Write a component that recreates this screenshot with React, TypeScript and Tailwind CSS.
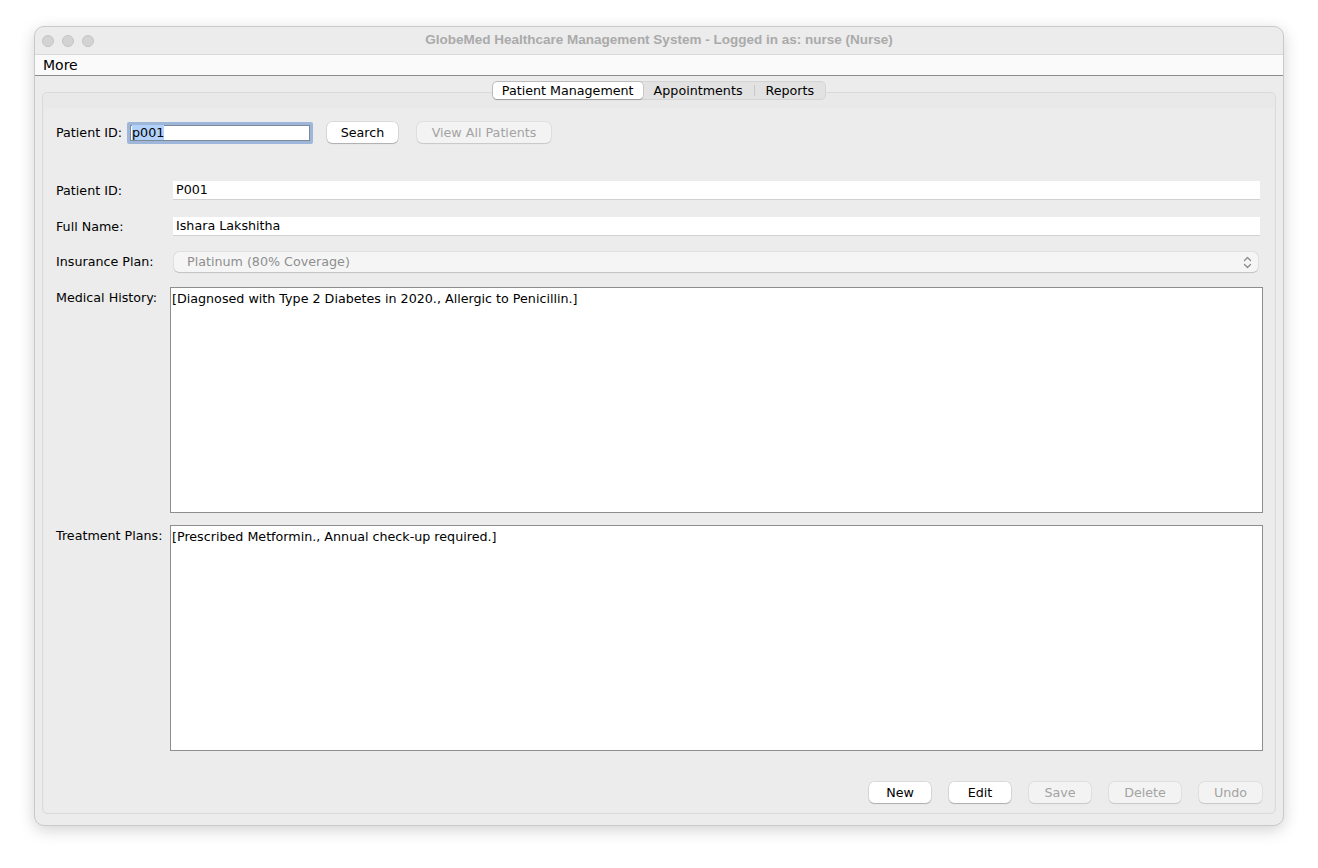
import React from "react";

const font = { fontFamily: '"DejaVu Sans", "Liberation Sans", Arial, sans-serif' };
const titleFont = { fontFamily: '"Liberation Sans", Arial, sans-serif' };

function Btn({ label, w, disabled }: { label: string; w: string; disabled?: boolean }) {
  return (
    <div
      className={`${w} h-[21px] flex items-center justify-center rounded-[5px] text-[12.7px] ${
        disabled
          ? "bg-[#f3f3f3] text-[#a3a3a3] shadow-[0_0_0_0.5px_rgba(0,0,0,0.08),0_0.5px_1px_rgba(0,0,0,0.12)]"
          : "bg-white text-black shadow-[0_0_0_0.5px_rgba(0,0,0,0.15),0_1px_1px_rgba(0,0,0,0.2)]"
      }`}
    >
      {label}
    </div>
  );
}

export default function App() {
  return (
    <div className="w-[1318px] h-[868px] bg-white pt-[26px] pl-[34px]" style={font}>
      <div className="w-[1250px] h-[800px] rounded-[10px] bg-[#ececec] border border-[#c9c9c9] shadow-[0_4px_16px_rgba(0,0,0,0.18)] overflow-hidden flex flex-col">
        {/* Title bar */}
        <div className="h-[27px] flex items-center relative shrink-0">
          <div className="flex gap-[8px] pl-[7px]">
            <div className="w-[12px] h-[12px] rounded-full bg-[#d3d3d3] border border-[#c4c4c4]" />
            <div className="w-[12px] h-[12px] rounded-full bg-[#d3d3d3] border border-[#c4c4c4]" />
            <div className="w-[12px] h-[12px] rounded-full bg-[#d3d3d3] border border-[#c4c4c4]" />
          </div>
          <div
            className="absolute inset-0 flex items-center justify-center text-[13.5px] font-bold text-[#aaaaaa]"
            style={titleFont}
          >
            GlobeMed Healthcare Management System - Logged in as: nurse (Nurse)
          </div>
        </div>
        {/* Menu bar */}
        <div className="h-[22px] shrink-0 bg-[#fafafa] border-t border-[#d8d8d8] border-b border-b-[#8c8c8c] flex items-center pl-[8px] text-[14px] text-black">
          More
        </div>
        {/* Content */}
        <div className="flex-1 flex flex-col px-[7px] pb-[11px]">
          <div className="h-[19px] mt-[5px] flex justify-center relative z-10">
            <div className="flex items-center h-[19px] rounded-[5px] bg-[#e2e2e2] border border-[#d4d4d4] text-[12.7px] text-black">
              <div className="h-[17px] px-[9px] flex items-center bg-white rounded-[4px] shadow-[0_0_0_0.5px_rgba(0,0,0,0.2),0_0.5px_1px_rgba(0,0,0,0.2)]">
                Patient Management
              </div>
              <div className="h-[17px] px-[11px] flex items-center">Appointments</div>
              <div className="w-px h-[11px] bg-[#c8c8c8]" />
              <div className="h-[17px] px-[11px] flex items-center">Reports</div>
            </div>
          </div>
          <div className="flex-1 -mt-[8px] rounded-[5px] border border-[#dadada] bg-[#e9e9e9] flex flex-col">
            <div className="mt-[15px] flex-1 mx-[1px] mb-[1px] bg-[#ececec] rounded-b-[4px] flex flex-col pl-[12px] pr-[11px] text-[12.7px] text-black">
              {/* Search row */}
              <div className="mt-[14px] h-[21px] flex items-center">
                <span className="w-[71px] shrink-0">Patient ID:</span>
                <div className="w-[186px] h-[22px] border-[3px] border-[#9db6d9] rounded-[2px] bg-white flex items-center">
                  <div className="w-full h-full border border-[#7f8a99] flex items-center pl-[1px]">
                    <span className="bg-[#b3d2fb] leading-[15px]">p001</span>
                  </div>
                </div>
                <div className="ml-[14px]">
                  <Btn label="Search" w="w-[71px]" />
                </div>
                <div className="ml-[19px]">
                  <Btn label="View All Patients" w="w-[134px]" disabled />
                </div>
              </div>
              {/* Patient ID */}
              <div className="mt-[38px] h-[19px] flex items-center">
                <span className="w-[117px] shrink-0">Patient ID:</span>
                <div className="flex-1 mr-[3px] h-[19px] bg-white border-b border-[#d2d2d2] flex items-center pl-[3px]">P001</div>
              </div>
              {/* Full name */}
              <div className="mt-[17px] h-[19px] flex items-center">
                <span className="w-[117px] shrink-0">Full Name:</span>
                <div className="flex-1 mr-[3px] h-[19px] bg-white border-b border-[#d2d2d2] flex items-center pl-[3px]">Ishara Lakshitha</div>
              </div>
              {/* Insurance */}
              <div className="mt-[16px] h-[20px] flex items-center">
                <span className="w-[118px] shrink-0">Insurance Plan:</span>
                <div className="flex-1 mr-[5px] h-[20px] bg-[#f5f5f5] rounded-[5px] shadow-[0_0_0_0.5px_rgba(0,0,0,0.08),0_0.5px_1px_rgba(0,0,0,0.15)] flex items-center justify-between pl-[13px] pr-[6px] text-[#8e8e8e]">
                  <span>Platinum (80% Coverage)</span>
                  <svg width="9" height="13" viewBox="0 0 9 13" fill="none" stroke="#8a8a8a" strokeWidth="1.3" strokeLinecap="round" strokeLinejoin="round">
                    <path d="M1.5 4.5 L4.5 1.5 L7.5 4.5" />
                    <path d="M1.5 8.5 L4.5 11.5 L7.5 8.5" />
                  </svg>
                </div>
              </div>
              {/* Medical history */}
              <div className="mt-[15px] h-[226px] flex items-start">
                <span className="w-[114px] shrink-0 mt-[1px] whitespace-nowrap">Medical History:</span>
                <div className="flex-1 h-full bg-white border border-[#8e8e8e] pl-[1px] pt-[1px]">
                  [Diagnosed with Type 2 Diabetes in 2020., Allergic to Penicillin.]
                </div>
              </div>
              {/* Treatment */}
              <div className="mt-[12px] h-[226px] flex items-start">
                <span className="w-[114px] shrink-0 mt-[1px] whitespace-nowrap">Treatment Plans:</span>
                <div className="flex-1 h-full bg-white border border-[#8e8e8e] pl-[1px] pt-[1px]">
                  [Prescribed Metformin., Annual check-up required.]
                </div>
              </div>
              {/* Buttons */}
              <div className="mt-[31px] h-[21px] flex justify-end gap-[18px] pr-[1px]">
                <Btn label="New" w="w-[62px]" />
                <Btn label="Edit" w="w-[62px]" />
                <Btn label="Save" w="w-[62px]" disabled />
                <Btn label="Delete" w="w-[72px]" disabled />
                <Btn label="Undo" w="w-[63px]" disabled />
              </div>
            </div>
          </div>
        </div>
      </div>
    </div>
  );
}
